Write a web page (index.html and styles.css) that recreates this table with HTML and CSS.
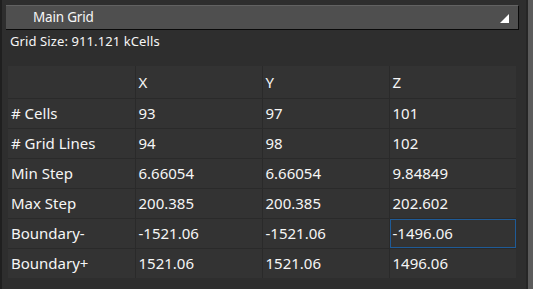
FILE: index.html
```html
<!DOCTYPE html>
<html>
<head>
<meta charset="utf-8">
<link rel="stylesheet" href="styles.css">
</head>
<body>
<div class="app">
  <div class="edge"></div>
  <div class="main">
    <div class="section-header">
      <span class="title">Main Grid</span>
      <svg class="tri" width="9" height="9" viewBox="0 0 9 9"><polygon points="9,0 9,9 0,9" fill="#ffffff"/></svg>
    </div>
    <div class="grid-size">Grid Size: 911.121 kCells</div>
    <table class="grid">
      <thead>
        <tr><th></th><th>X</th><th>Y</th><th>Z</th></tr>
      </thead>
      <tbody>
        <tr><td>#&nbsp;Cells</td><td>93</td><td>97</td><td>101</td></tr>
        <tr><td>#&nbsp;Grid Lines</td><td>94</td><td>98</td><td>102</td></tr>
        <tr><td>Min Step</td><td>6.66054</td><td>6.66054</td><td>9.84849</td></tr>
        <tr><td>Max Step</td><td>200.385</td><td>200.385</td><td>202.602</td></tr>
        <tr><td>Boundary-</td><td>-1521.06</td><td>-1521.06</td><td class="selected">-1496.06</td></tr>
        <tr><td>Boundary+</td><td>1521.06</td><td>1521.06</td><td>1496.06</td></tr>
      </tbody>
    </table>
  </div>
  <div class="scroll">
    <div class="scroll-gap"></div>
    <div class="scroll-track"></div>
  </div>
</div>
</body>
</html>
```

FILE: styles.css
```css
html, body {
  margin: 0;
  padding: 0;
  width: 533px;
  height: 289px;
  overflow: hidden;
  background: #2e2e2e;
  font-family: "Noto Sans", "Open Sans", sans-serif;
  color: #f6f6f6;
}

.app {
  display: flex;
  height: 289px;
}

.edge {
  width: 2px;
  background: #1f1f1f;
}

.main {
  flex: 1;
  padding: 5px 0 0 4px;
  display: flex;
  flex-direction: column;
}

.section-header {
  width: 476px;
  height: 23px;
  background: #4f4f4f;
  border-top: 1px solid #626262;
  border-right: 1px solid #0a0a0a;
  border-bottom: 1px solid #0a0a0a;
  display: flex;
  align-items: center;
  justify-content: space-between;
  padding: 0 9px 0 27px;
  box-sizing: content-box;
}

.title {
  font-size: 13.5px;
  color: #f6f6f6;
  line-height: 1;
  letter-spacing: -0.2px;
}

.tri {
  display: block;
  margin-top: 1px;
}

.grid-size {
  font-size: 13px;
  padding: 2px 0 0 4px;
  height: 18px;
  line-height: 18px;
  letter-spacing: 0.1px;
}

.grid {
  margin: 16px 0 0 2px;
  border-collapse: collapse;
  width: 508px;
  table-layout: fixed;
  font-size: 15px;
}

.grid th, .grid td {
  width: 127px;
  border: 1px solid #2a2a2a;
  background: #333333;
  text-align: left;
  font-weight: normal;
  padding: 0 0 0 3px;
  height: 30px;
  box-sizing: border-box;
  white-space: nowrap;
  color: #f6f6f6;
}

.grid thead th {
  height: 32px;
  border-top: none;
}

.grid tr > :first-child {
  border-left: none;
}

.grid tr > :last-child {
  border-right: none;
}

.grid tbody tr:last-child td {
  border-bottom: none;
}

.grid td.selected {
  box-shadow: inset 0 0 0 1px #1f5b97;
}

.scroll {
  display: flex;
  width: 7px;
}

.scroll-gap {
  width: 2px;
  background: #262626;
}

.scroll-track {
  flex: 1;
  background: #5b5b5b;
}
```
